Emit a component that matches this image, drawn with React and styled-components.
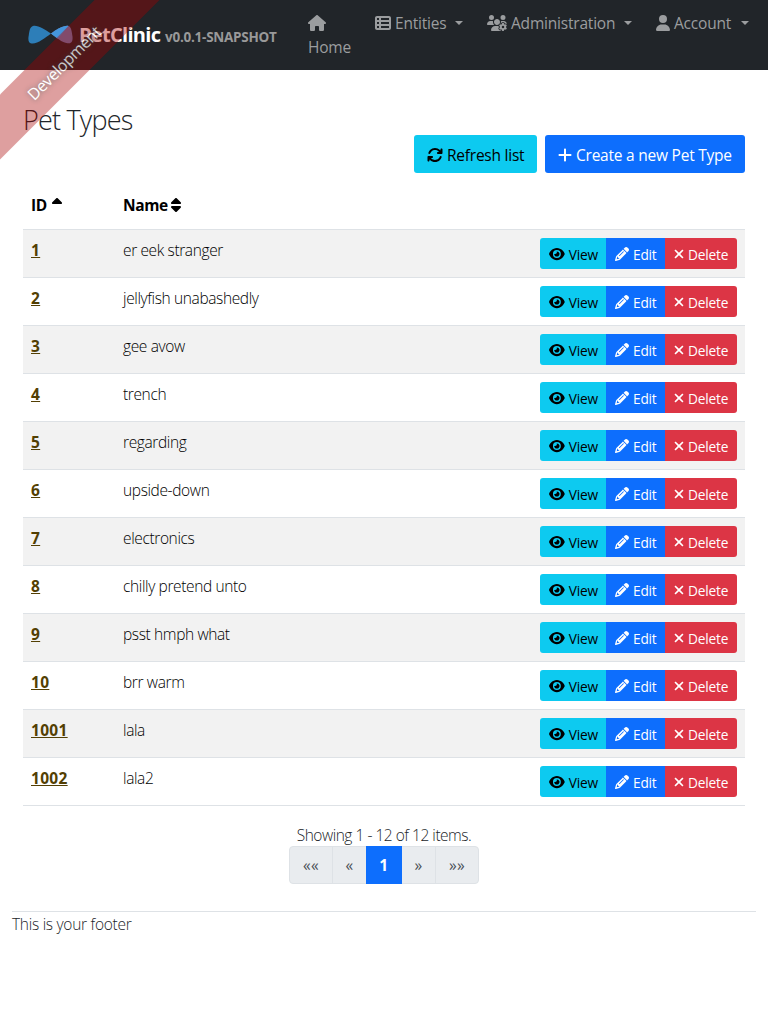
import React from 'react';
import styled, { createGlobalStyle, css } from 'styled-components';
import {
  FaHouse, FaTableList, FaUsersGear, FaUser, FaArrowsRotate, FaPlus, FaEye, FaPencil, FaSort, FaSortUp,
} from 'react-icons/fa6';

const GlobalStyle = createGlobalStyle`
  *, *::before, *::after { box-sizing: border-box; }
  body {
    margin: 0;
    background: #fff;
    color: #212529;
    font: 300 15.5px/24px 'Open Sans', 'Noto Sans', sans-serif;
    letter-spacing: -0.37px;
  }
  svg { display: block; flex: none; }
`;

const Page = styled.div`
  position: relative;
  min-height: 1024px;
  overflow: hidden;
`;

const Ribbon = styled.div`
  position: absolute;
  z-index: 2;
  top: 40px;
  left: -56px;
  width: 240px;
  padding: 11px 0;
  transform: rotate(-45deg);
  background: rgba(170, 0, 0, 0.5);
  opacity: 0.75;
  color: #fff;
  font-size: 16px;
  font-weight: 400;
  text-align: center;
  text-shadow: 0 0 5px #444;
  pointer-events: none;
`;

const Navbar = styled.header`
  display: flex;
  height: 70px;
  padding: 11px 19px 0 28px;
  background: #212529;
`;

const Brand = styled.div`
  display: flex;
  align-items: center;
  width: 280px;
  height: 48px;
  svg { margin-right: 6px; }
`;

const BrandName = styled.span`
  width: 86px;
  color: #fff;
  font-size: 20px;
  font-weight: 700;
  letter-spacing: -0.7px;
  white-space: nowrap;
`;

const Version = styled.span`
  padding-top: 3px;
  color: #999;
  font-size: 13.5px;
  font-weight: 700;
  letter-spacing: -0.25px;
  white-space: nowrap;
`;

const Nav = styled.nav`
  display: flex;
  flex: 1;
  justify-content: space-between;
`;

const NavLink = styled.a`
  display: flex;
  flex-direction: ${(p) => (p.$stacked ? 'column' : 'row')};
  align-items: ${(p) => (p.$stacked ? 'flex-start' : 'center')};
  height: ${(p) => (p.$stacked ? '48px' : '24px')};
  color: #9b9d9f;
  font-weight: 400;
  svg { margin: ${(p) => (p.$stacked ? '4px 0' : '0 4px 0 0')}; }
`;

const NavLabel = styled.span`
  width: ${(p) => p.$w}px;
  letter-spacing: -0.2px;
  white-space: nowrap;
`;

const Caret = styled.i`
  margin-left: 8px;
  border: 4.5px solid transparent;
  border-top-color: currentColor;
  border-bottom: 0;
`;

const Main = styled.main`
  padding: 32px 23px 0;
`;

const Title = styled.h2`
  margin: 0;
  height: 33px;
  font-size: 27px;
  font-weight: 300;
  line-height: 36px;
  letter-spacing: -0.8px;
`;

const Toolbar = styled.div`
  display: flex;
  justify-content: flex-end;
  gap: 8px;
`;

const tones = {
  info: css`background: #0dcaf0; color: #000;`,
  primary: css`background: #0d6efd; color: #fff;`,
  danger: css`background: #dc3545; color: #fff;`,
};

const Button = styled.button`
  display: flex;
  align-items: center;
  gap: 4px;
  width: ${(p) => p.$w}px;
  height: 38px;
  padding: 1px 0 0 13px;
  border: 0;
  border-radius: 3px;
  font: 400 15.5px/24px 'Open Sans', sans-serif;
  letter-spacing: -0.23px;
  white-space: nowrap;
  ${(p) => tones[p.$tone]}
`;

const SmallButton = styled(Button)`
  height: 31px;
  padding-left: 9px;
  font-size: 13.7px;
  line-height: 21px;
  letter-spacing: -0.2px;
  border-radius: 0;
`;

const ButtonGroup = styled.div`
  display: flex;
  width: 197px;
  margin-left: auto;
  border-radius: 3px;
  overflow: hidden;
`;

const Table = styled.table`
  width: 100%;
  margin-top: 12px;
  border-collapse: separate;
  border-spacing: 0;
  table-layout: fixed;
`;

const HeadCell = styled.th`
  height: 45px;
  width: ${(p) => p.$w};
  padding: 8px;
  border-bottom: 1px solid #dee2e6;
  color: #000;
  font-weight: 700;
  text-align: left;
  vertical-align: top;
`;

const Sorter = styled.span`
  display: flex;
  align-items: center;
  gap: ${(p) => p.$gap}px;
`;

const Row = styled.tr`
  background: ${(p) => (p.$striped ? '#f2f2f2' : '#fff')};
`;

const Cell = styled.td`
  height: 48px;
  padding: 8px;
  border-bottom: 1px solid #dee2e6;
  color: #000;
  vertical-align: top;
`;

const IdLink = styled.a`
  color: #533f03;
  font-weight: 700;
  text-decoration: underline;
  letter-spacing: 0.3px;
`;

const Summary = styled.div`
  margin-top: 17px;
  height: 23px;
  text-align: center;
  letter-spacing: -0.48px;
`;

const Pagination = styled.div`
  display: flex;
  width: 190px;
  height: 38px;
  margin: 0 auto;
  border: 1px solid #dee2e6;
  border-radius: 4px;
  background: #e9ecef;
`;

const PageItem = styled.span`
  width: ${(p) => p.$w}px;
  border-left: ${(p) => (p.$line ? '1px solid #dee2e6' : '0')};
  color: #495057;
  font-weight: 400;
  line-height: 36px;
  letter-spacing: 0.4px;
  text-align: center;
  ${(p) => p.$active && css`
    margin: -1px 0;
    background: #0d6efd;
    color: #fff;
    font-weight: 700;
    line-height: 38px;
  `}
`;

const Footer = styled.footer`
  margin: 27px 12px 0;
  border-top: 1px solid #dee2e6;
  letter-spacing: -0.28px;
`;

const Logo = () => (
  <svg width="45" height="20" viewBox="0 0 45 20">
    <path d="M5 1C9-.5 17 4.500 23 8.500C17 13 9 19.500 3.500 18.500C0 18 0 14 .8 10C1.600 5 2 2 5 1Z" fill="#2d7eb8" />
    <path d="M23 8.500C28 5 36 0 40.500 1C43.500 2 43.800 7 44.500 11.500C45 16 43.500 19 39.500 18.200C34 17.500 28 12.500 23 8.500Z" fill="#6a78ad" />
    <path d="M23 8.500C28 5 36 0 40.500 1L30 13.500C27 11.800 25 10.200 23 8.500Z" fill="#4596dc" />
  </svg>
);

const Cross = () => (
  <svg width="10" height="14" viewBox="-22 0 366 512" fill="currentColor">
    <path d="M310.6 361.4c12.5 12.5 12.5 32.75 0 45.25C304.4 412.9 296.2 416 288 416s-16.38-3.125-22.62-9.375L160 301.3L54.63 406.6C48.38 412.9 40.19 416 32 416S15.63 412.9 9.375 406.6c-12.5-12.5-12.5-32.75 0-45.25l105.4-105.4L9.375 150.6c-12.5-12.5-12.5-32.75 0-45.25s32.75-12.5 45.25 0L160 210.8l105.4-105.4c12.5-12.5 32.75-12.5 45.25 0s12.5 32.75 0 45.25l-105.4 105.4L310.6 361.4z" />
  </svg>
);

const petTypes = [
  ['1', 'er eek stranger'],
  ['2', 'jellyfish unabashedly'],
  ['3', 'gee avow'],
  ['4', 'trench'],
  ['5', 'regarding'],
  ['6', 'upside-down'],
  ['7', 'electronics'],
  ['8', 'chilly pretend unto'],
  ['9', 'psst hmph what'],
  ['10', 'brr warm'],
  ['1001', 'lala'],
  ['1002', 'lala2'],
];

export default function App() {
  return (
    <Page>
      <GlobalStyle />
      <Ribbon>Development</Ribbon>
      <Navbar>
        <Brand>
          <Logo />
          <BrandName>PetClinic</BrandName>
          <Version>v0.0.1-SNAPSHOT</Version>
        </Brand>
        <Nav>
          <NavLink $stacked>
            <FaHouse style={{ width: 18, height: 16 }} />
            <NavLabel $w={43}>Home</NavLabel>
          </NavLink>
          <NavLink>
            <FaTableList size={16} />
            <NavLabel $w={52}>Entities</NavLabel>
            <Caret />
          </NavLink>
          <NavLink>
            <FaUsersGear style={{ width: 20, height: 16 }} />
            <NavLabel $w={105}>Administration</NavLabel>
            <Caret />
          </NavLink>
          <NavLink>
            <FaUser style={{ width: 14, height: 16 }} />
            <NavLabel $w={59}>Account</NavLabel>
            <Caret />
          </NavLink>
        </Nav>
      </Navbar>

      <Main>
        <Title>Pet Types</Title>
        <Toolbar>
          <Button $tone="info" $w={123}><FaArrowsRotate size={16} />Refresh list</Button>
          <Button $tone="primary" $w={200}><FaPlus style={{ width: 14, height: 16 }} />Create a new Pet Type</Button>
        </Toolbar>
        <Table>
          <thead>
            <tr>
              <HeadCell $w="92px"><Sorter $gap={5}>ID <FaSortUp style={{ width: 10, height: 16 }} /></Sorter></HeadCell>
              <HeadCell><Sorter $gap={3}>Name <FaSort style={{ width: 10, height: 16 }} /></Sorter></HeadCell>
              <HeadCell $w="213px" />
            </tr>
          </thead>
          <tbody>
            {petTypes.map(([id, name], i) => (
              <Row key={id} $striped={i % 2 === 0}>
                <Cell><IdLink>{id}</IdLink></Cell>
                <Cell>{name}</Cell>
                <Cell>
                  <ButtonGroup>
                    <SmallButton $tone="info" $w={66}><FaEye style={{ width: 15.75, height: 14 }} />View</SmallButton>
                    <SmallButton $tone="primary" $w={59}><FaPencil size={14} />Edit</SmallButton>
                    <SmallButton $tone="danger" $w={72}><Cross />Delete</SmallButton>
                  </ButtonGroup>
                </Cell>
              </Row>
            ))}
          </tbody>
        </Table>
        <Summary>Showing 1 - 12 of 12 items.</Summary>
        <Pagination>
          <PageItem $w={42}>««</PageItem>
          <PageItem $w={34} $line>«</PageItem>
          <PageItem $w={36} $active>1</PageItem>
          <PageItem $w={33}>»</PageItem>
          <PageItem $w={43} $line>»»</PageItem>
        </Pagination>
      </Main>
      <Footer>This is your footer</Footer>
    </Page>
  );
}
